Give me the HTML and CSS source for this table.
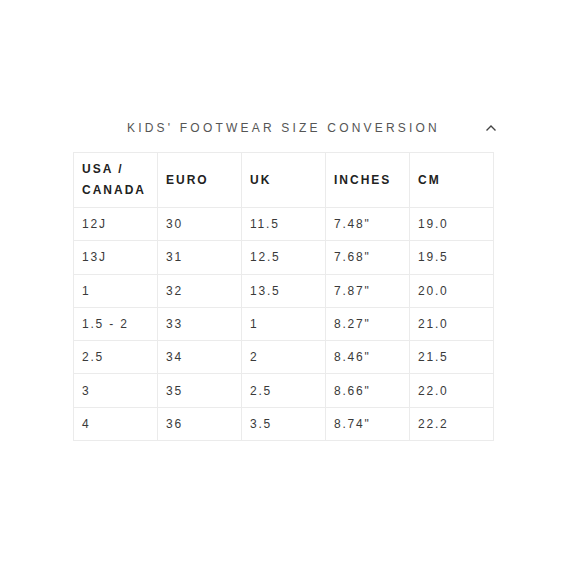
FILE: index.html
```html
<!DOCTYPE html>
<html>
<head>
<meta charset="utf-8">
<link rel="stylesheet" href="styles.css">
</head>
<body>
<div class="page">
  <div class="panel">
    <div class="head">
      <span></span>
      <h2 class="title">KIDS' FOOTWEAR SIZE CONVERSION</h2>
      <svg class="chev" width="12" height="8" viewBox="0 0 12 8"><path d="M1.5 6.5 L6 2 L10.5 6.5" fill="none" stroke="#444" stroke-width="1.4"/></svg>
    </div>
    <table class="sizes">
      <thead>
        <tr><th>USA /<br>CANADA</th><th>EURO</th><th>UK</th><th>INCHES</th><th>CM</th></tr>
      </thead>
      <tbody>
        <tr><td>12J</td><td>30</td><td>11.5</td><td>7.48"</td><td>19.0</td></tr>
        <tr><td>13J</td><td>31</td><td>12.5</td><td>7.68"</td><td>19.5</td></tr>
        <tr><td>1</td><td>32</td><td>13.5</td><td>7.87"</td><td>20.0</td></tr>
        <tr><td>1.5 - 2</td><td>33</td><td>1</td><td>8.27"</td><td>21.0</td></tr>
        <tr><td>2.5</td><td>34</td><td>2</td><td>8.46"</td><td>21.5</td></tr>
        <tr><td>3</td><td>35</td><td>2.5</td><td>8.66"</td><td>22.0</td></tr>
        <tr><td>4</td><td>36</td><td>3.5</td><td>8.74"</td><td>22.2</td></tr>
      </tbody>
    </table>
  </div>
</div>
</body>
</html>
```
FILE: styles.css
```css
html, body {
  margin: 0;
  padding: 0;
  background: #ffffff;
}
body {
  font-family: "Liberation Sans", Arial, sans-serif;
  color: #333;
}
.page {
  width: 580px;
  height: 580px;
  display: flex;
  justify-content: flex-start;
}
.panel {
  margin-left: 73px;
  padding-top: 120px;
  width: 421px;
}
.head {
  display: grid;
  grid-template-columns: 1fr auto 1fr;
  align-items: center;
  height: 16px;
  margin-bottom: 16px;
}
.title {
  margin: 0;
  font-size: 12px;
  font-weight: normal;
  letter-spacing: 3.2px;
  color: #555;
  line-height: 16px;
  white-space: nowrap;
}
.chev {
  justify-self: end;
  margin-right: -3px;
}
.sizes {
  border-collapse: collapse;
  table-layout: fixed;
  width: 421px;
}
.sizes th, .sizes td {
  border: 1px solid #ebebeb;
  text-align: left;
  padding: 0 0 0 8px;
  vertical-align: middle;
}
.sizes th {
  height: 54px;
  font-size: 12px;
  font-weight: bold;
  letter-spacing: 2px;
  line-height: 21px;
  color: #222;
}
.sizes td {
  height: 32.3px;
  font-size: 12px;
  letter-spacing: 1.8px;
  color: #3a3a3a;
}
```
